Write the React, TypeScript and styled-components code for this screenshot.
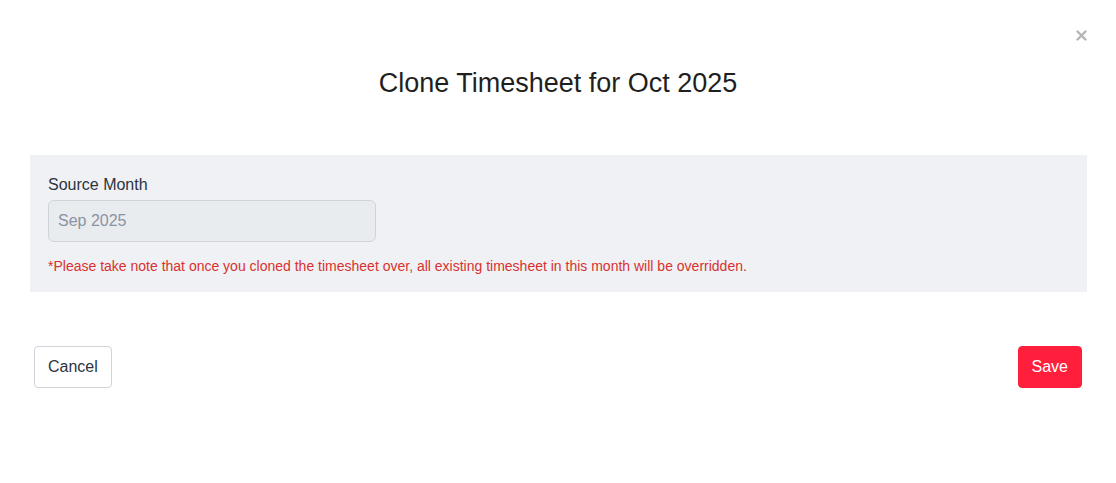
import React from "react";
import styled, { createGlobalStyle } from "styled-components";

const Global = createGlobalStyle`
  html, body { margin: 0; padding: 0; background: #ffffff; }
  body { font-family: "Liberation Sans", Arial, Helvetica, sans-serif; }
  * { box-sizing: border-box; }
`;

const Modal = styled.div`
  position: relative;
  width: 1116px;
  height: 483px;
  background: #ffffff;
  display: flex;
  flex-direction: column;
`;

const CloseButton = styled.button`
  position: absolute;
  top: 27px;
  right: 27px;
  width: 16px;
  height: 16px;
  padding: 0;
  border: none;
  background: transparent;
  display: flex;
  align-items: center;
  justify-content: center;
  cursor: pointer;
`;

const Header = styled.div`
  display: flex;
  justify-content: center;
  padding-top: 67px;
`;

const Title = styled.h2`
  margin: 0;
  font-size: 27px;
  line-height: 32px;
  font-weight: 400;
  color: #1f1f1f;
`;

const Panel = styled.div`
  margin: 56px 29px 0 30px;
  background: #f0f1f4;
  padding: 21px 18px 18px 18px;
  display: flex;
  flex-direction: column;
`;

const Label = styled.label`
  font-size: 16px;
  line-height: 18px;
  color: #2d3440;
  margin-bottom: 6px;
`;

const Input = styled.input`
  width: 328px;
  height: 42px;
  border: 1px solid #cfd4db;
  border-radius: 6px;
  background: #e9ecef;
  padding: 0 9px;
  font-family: inherit;
  font-size: 16px;
  color: #8a93a2;
  outline: none;
  &::placeholder { color: #8a93a2; }
`;

const Warning = styled.p`
  margin: 16px 0 0 0;
  font-size: 14px;
  line-height: 16px;
  color: #d8312f;
`;

const Footer = styled.div`
  display: flex;
  justify-content: space-between;
  align-items: center;
  padding: 0 34px 0 34px;
  margin-top: 54px;
`;

const Button = styled.button<{ $variant?: "primary" | "secondary" }>`
  height: 42px;
  padding: 0 13px;
  border-radius: 4px;
  font-family: inherit;
  font-size: 16px;
  cursor: pointer;
  border: 1px solid ${(p) => (p.$variant === "primary" ? "#ff1f3d" : "#cfd4db")};
  background: ${(p) => (p.$variant === "primary" ? "#ff1f3d" : "#ffffff")};
  color: ${(p) => (p.$variant === "primary" ? "#ffffff" : "#2d3440")};
`;

export default function App() {
  return (
    <>
      <Global />
      <Modal>
        <CloseButton aria-label="Close">
          <svg width="11" height="11" viewBox="0 0 11 11">
            <path d="M1.5 1.5 L9.5 9.5 M9.5 1.5 L1.5 9.5" stroke="#b5b5b5" strokeWidth="2.4" strokeLinecap="round" />
          </svg>
        </CloseButton>
        <Header>
          <Title>Clone Timesheet for Oct 2025</Title>
        </Header>
        <Panel>
          <Label>Source Month</Label>
          <Input value="Sep 2025" disabled readOnly />
          <Warning>
            *Please take note that once you cloned the timesheet over, all existing timesheet in this month will be overridden.
          </Warning>
        </Panel>
        <Footer>
          <Button $variant="secondary">Cancel</Button>
          <Button $variant="primary">Save</Button>
        </Footer>
      </Modal>
    </>
  );
}
